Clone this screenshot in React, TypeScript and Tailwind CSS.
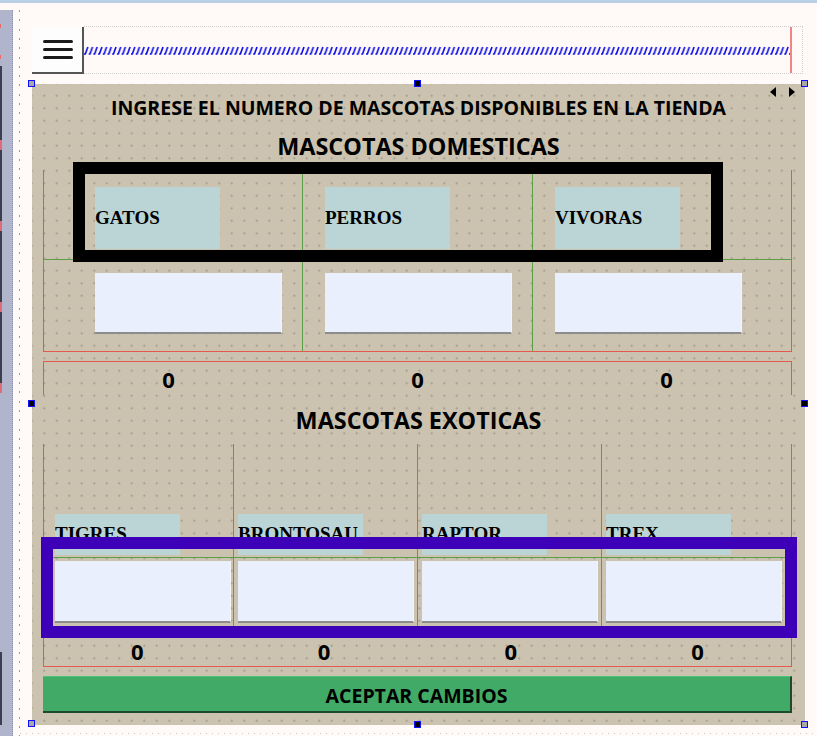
import React from "react";

const sans = { fontFamily: '"Open Sans", "Noto Sans", sans-serif' };
const serif = { fontFamily: '"Liberation Serif", "DejaVu Serif", serif' };

function Handle({ className, dark }: { className: string; dark?: boolean }) {
  return (
    <div
      className={`absolute w-[7px] h-[7px] border-[1.5px] border-[#1010ff] ${dark ? "bg-black" : "bg-[#a8a8a8]"} ${className}`}
    />
  );
}

function Label({ text, className }: { text: string; className?: string }) {
  return (
    <div
      className={`bg-[#bbd4d5] w-[125px] flex items-center overflow-hidden whitespace-nowrap text-[19px] font-bold text-black ${className ?? ""}`}
      style={serif}
    >
      {text}
    </div>
  );
}

function Input({ className }: { className?: string }) {
  return <div className={`bg-[#e9effd] border-b-2 border-[#8c8c8c] border-r border-r-[#f4f4f4] ${className ?? ""}`} />;
}

export default function App() {
  const dots =
    "bg-[radial-gradient(circle,#a19b90_0.9px,transparent_1.1px)] bg-size-[12.5px_12.5px] bg-position-[-6.5px_-7px]";
  return (
    <div className="w-[817px] h-[736px] bg-[#fffaf7] flex flex-col overflow-hidden relative" style={sans}>
      <div className="h-[3px] bg-[#b8cfe6] shrink-0" />
      <div className="flex flex-1">
        {/* left strip */}
        <div className="w-[13px] mt-[7px] bg-[#b1b5cc] border-r border-dotted border-r-[#8d93ad] relative shrink-0">
          <div className="absolute left-0 top-[14px] w-[1px] h-[4px] bg-[#e86a6a]" />
          <div className="absolute left-0 top-[45px] w-[1px] h-[4px] bg-[#e86a6a]" />
          <div className="absolute left-0 top-[56px] w-[2px] h-[327px] bg-[#3c3f4c]" />
          <div className="absolute left-0 top-[130px] w-[2px] h-[10px] bg-[#e06a78]" />
          <div className="absolute left-0 top-[211px] w-[2px] h-[10px] bg-[#e06a78]" />
          <div className="absolute left-0 top-[292px] w-[2px] h-[10px] bg-[#e06a78]" />
          <div className="absolute left-0 top-[373px] w-[2px] h-[10px] bg-[#e06a78]" />
          <div className="absolute left-0 top-[642px] w-[2px] h-[73px] bg-[#3c3f4c]" />
        </div>
        {/* dotted guide column */}
        <div className="w-[19px] shrink-0 flex">
          <div className="ml-[6px] w-[1px] mt-[7px] bg-[repeating-linear-gradient(to_bottom,#9a9a9a_0_2px,transparent_2px_9.3px)]" />
        </div>

        {/* main */}
        <div className="flex flex-col w-[773px]">
          {/* top bar */}
          <div className="mt-[23px] h-[48px] flex w-[771px]">
            <div className="w-[53px] mt-[1px] bg-[#fdfdfd] border-r-2 border-b-2 border-[#555] flex flex-col justify-center items-center gap-[5px] pl-[1px]">
              <div className="w-[30px] h-[3px] rounded-full bg-[#1a1a1a]" />
              <div className="w-[30px] h-[3px] rounded-full bg-[#1a1a1a]" />
              <div className="w-[30px] h-[3px] rounded-full bg-[#1a1a1a]" />
            </div>
            <div className="flex-1 flex border-y border-r border-dotted border-[#cfcfcf]">
              <div className="flex-1 flex items-center">
                <svg width="706" height="9" className="block">
                  <defs>
                    <pattern id="zz" width="4.7" height="9" patternUnits="userSpaceOnUse">
                      <path d="M0 8 H1.3 L3.8 1" stroke="#0a0ae6" strokeWidth="1.6" fill="none" />
                    </pattern>
                  </defs>
                  <rect width="706" height="9" fill="url(#zz)" />
                </svg>
              </div>
              <div className="w-[2px] bg-[#f08585]" />
              <div className="w-[10px]" />
            </div>
          </div>

          {/* panel */}
          <div className={`mt-[10px] h-[641px] w-[773px] bg-[#cbc2af] relative flex flex-col`}>
            <div className={`absolute inset-0 ${dots}`} />
            <div className="relative flex flex-col">
              {/* arrows */}
              <div className="absolute right-[10px] top-[3px] flex gap-[13px]">
                <svg width="6" height="10"><path d="M6 0 L0 5 L6 10 Z" fill="#000" /></svg>
                <svg width="6" height="10"><path d="M0 0 L6 5 L0 10 Z" fill="#000" /></svg>
              </div>
              <div className="pt-[11px] h-[37px] text-center text-[19.5px] leading-[26px] font-bold text-black">
                INGRESE EL NUMERO DE MASCOTAS DISPONIBLES EN LA TIENDA
              </div>
              <div className="mt-[10px] h-[30px] text-center text-[23.4px] leading-[30px] font-bold text-black">
                MASCOTAS DOMESTICAS
              </div>

              {/* domestic table */}
              <div className="mt-[9px] ml-[11px] w-[749px] h-[182px] border-x border-b border-x-[#e25a4c] border-b-[#e25a4c] flex">
                <div className="w-[258px] flex flex-col">
                  <div className="h-[90px] border-b border-b-[#5aa048] pl-[51px] pt-[17px]">
                    <Label text="GATOS" className="h-[62px]" />
                  </div>
                  <div className="pl-[51px] pt-[13px]">
                    <Input className="w-[187px] h-[61px]" />
                  </div>
                </div>
                <div className="w-[230px] border-l border-l-[#5aa048] flex flex-col">
                  <div className="h-[90px] border-b border-b-[#5aa048] pl-[22px] pt-[17px]">
                    <Label text="PERROS" className="h-[62px]" />
                  </div>
                  <div className="pl-[22px] pt-[13px]">
                    <Input className="w-[187px] h-[61px]" />
                  </div>
                </div>
                <div className="flex-1 border-l border-l-[#5aa048] flex flex-col">
                  <div className="h-[90px] border-b border-b-[#5aa048] pl-[22px] pt-[17px]">
                    <Label text="VIVORAS" className="h-[62px]" />
                  </div>
                  <div className="pl-[22px] pt-[13px]">
                    <Input className="w-[187px] h-[61px]" />
                  </div>
                </div>
              </div>

              {/* domestic counts */}
              <div className="mt-[9px] ml-[11px] w-[749px] h-[34px] border-x border-t border-x-[#e25a4c] border-t-[#e25a4c] grid grid-cols-3 text-[22px] font-bold leading-[34px] text-center text-black">
                <div>0</div>
                <div>0</div>
                <div>0</div>
              </div>

              <div className="mt-[10px] h-[30px] text-center text-[23.4px] leading-[30px] font-bold text-black">
                MASCOTAS EXOTICAS
              </div>

              {/* exotic table */}
              <div className="mt-[9px] ml-[11px] w-[749px] h-[223px] border-x border-b border-x-[#e25a4c] border-b-[#e25a4c] flex flex-col">
                <div className="h-[183px] flex">
                  {[
                    { t: "TIGRES", w: "w-[189px]", pl: "pl-[11px]", b: "" },
                    { t: "BRONTOSAU", w: "w-[184px]", pl: "pl-[4px]", b: "border-l border-l-[#5aa048]" },
                    { t: "RAPTOR", w: "w-[184px]", pl: "pl-[4px]", b: "border-l border-l-[#5aa048]" },
                    { t: "TREX", w: "flex-1", pl: "pl-[4px]", b: "border-l border-l-[#5aa048]" },
                  ].map((c) => (
                    <div key={c.t} className={`${c.w} ${c.b} flex flex-col`}>
                      <div className={`h-[114px] border-b border-b-[#5aa048] ${c.pl} pt-[70px]`}>
                        <Label text={c.t} className="h-[41px]" />
                      </div>
                      <div className={`${c.pl} pt-[3px]`}>
                        <Input className="w-[176px] h-[62px]" />
                      </div>
                    </div>
                  ))}
                </div>
                <div className="flex-1 grid grid-cols-4 text-[22px] font-bold leading-[30px] pt-[9px] text-center text-black">
                  <div>0</div>
                  <div>0</div>
                  <div>0</div>
                  <div>0</div>
                </div>
              </div>

              {/* button */}
              <div className="mt-[9px] ml-[11px] w-[749px] h-[37px] pt-[3px] bg-[#41aa67] border-b-2 border-r-2 border-[#1d4a2c] border-t border-t-[#4cc276] flex items-center justify-center text-[19.5px] font-bold text-black">
                ACEPTAR CAMBIOS
              </div>
            </div>

            {/* highlight overlays */}
            <div className="absolute left-[41px] top-[78px] w-[650px] h-[100px] border-[12px] border-black" />
            <div className="absolute left-[9px] top-[453px] w-[756px] h-[101px] border-[12px] border-[#3d00b8]" />

            {/* selection handles */}
            <Handle className="left-[-4px] top-[-4px]" />
            <Handle className="left-[382px] top-[-4px]" dark />
            <Handle className="left-[769px] top-[-4px]" />
            <Handle className="left-[-4px] top-[316px]" dark />
            <Handle className="left-[769px] top-[316px]" dark />
            <Handle className="left-[-4px] top-[636px]" />
            <Handle className="left-[382px] top-[637px]" dark />
            <Handle className="left-[769px] top-[637px]" />
          </div>
        </div>
      </div>
      <div className="absolute left-[20px] right-0 top-[733px] h-[1px] bg-[repeating-linear-gradient(to_right,#c8c8c8_0_1px,transparent_1px_6px)]" />
    </div>
  );
}
